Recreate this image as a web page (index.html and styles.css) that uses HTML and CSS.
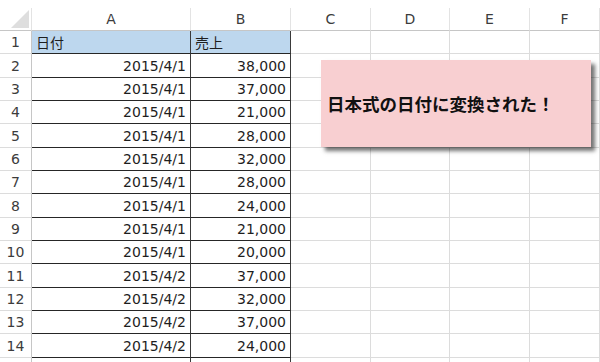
FILE: index.html
```html
<!DOCTYPE html>
<html>
  <head>
    <title>日付の変換</title>
    <meta name="viewport" content="width=device-width, initial-scale=1.0" />
    <link rel="stylesheet" href="styles.css">
  </head>
  <body>
    <div class="sheet">
      <div class="row head">
        <div class="corner"><span class="tri"></span></div>
        <div>A</div><div>B</div><div>C</div><div>D</div><div>E</div><div>F</div>
      </div>
      <div class="row">
        <div class="num">1</div>
        <div class="cell a title">日付</div>
        <div class="cell b title">売上</div>
        <div class="cell"></div><div class="cell"></div><div class="cell"></div><div class="cell"></div>
      </div>
      <div class="row">
        <div class="num">2</div>
        <div class="cell a">2015/4/1</div><div class="cell b">38,000</div>
        <div class="cell"></div><div class="cell"></div><div class="cell"></div><div class="cell"></div>
      </div>
      <div class="row">
        <div class="num">3</div>
        <div class="cell a">2015/4/1</div><div class="cell b">37,000</div>
        <div class="cell"></div><div class="cell"></div><div class="cell"></div><div class="cell"></div>
      </div>
      <div class="row">
        <div class="num">4</div>
        <div class="cell a">2015/4/1</div><div class="cell b">21,000</div>
        <div class="cell"></div><div class="cell"></div><div class="cell"></div><div class="cell"></div>
      </div>
      <div class="row">
        <div class="num">5</div>
        <div class="cell a">2015/4/1</div><div class="cell b">28,000</div>
        <div class="cell"></div><div class="cell"></div><div class="cell"></div><div class="cell"></div>
      </div>
      <div class="row">
        <div class="num">6</div>
        <div class="cell a">2015/4/1</div><div class="cell b">32,000</div>
        <div class="cell"></div><div class="cell"></div><div class="cell"></div><div class="cell"></div>
      </div>
      <div class="row">
        <div class="num">7</div>
        <div class="cell a">2015/4/1</div><div class="cell b">28,000</div>
        <div class="cell"></div><div class="cell"></div><div class="cell"></div><div class="cell"></div>
      </div>
      <div class="row">
        <div class="num">8</div>
        <div class="cell a">2015/4/1</div><div class="cell b">24,000</div>
        <div class="cell"></div><div class="cell"></div><div class="cell"></div><div class="cell"></div>
      </div>
      <div class="row">
        <div class="num">9</div>
        <div class="cell a">2015/4/1</div><div class="cell b">21,000</div>
        <div class="cell"></div><div class="cell"></div><div class="cell"></div><div class="cell"></div>
      </div>
      <div class="row">
        <div class="num">10</div>
        <div class="cell a">2015/4/1</div><div class="cell b">20,000</div>
        <div class="cell"></div><div class="cell"></div><div class="cell"></div><div class="cell"></div>
      </div>
      <div class="row">
        <div class="num">11</div>
        <div class="cell a">2015/4/2</div><div class="cell b">37,000</div>
        <div class="cell"></div><div class="cell"></div><div class="cell"></div><div class="cell"></div>
      </div>
      <div class="row">
        <div class="num">12</div>
        <div class="cell a">2015/4/2</div><div class="cell b">32,000</div>
        <div class="cell"></div><div class="cell"></div><div class="cell"></div><div class="cell"></div>
      </div>
      <div class="row">
        <div class="num">13</div>
        <div class="cell a">2015/4/2</div><div class="cell b">37,000</div>
        <div class="cell"></div><div class="cell"></div><div class="cell"></div><div class="cell"></div>
      </div>
      <div class="row">
        <div class="num">14</div>
        <div class="cell a">2015/4/2</div><div class="cell b">24,000</div>
        <div class="cell"></div><div class="cell"></div><div class="cell"></div><div class="cell"></div>
      </div>
      <!-- row 15 is only a sliver at the bottom edge -->
      <div class="row">
        <div class="num"></div>
        <div class="cell a"></div><div class="cell b"></div>
        <div class="cell"></div><div class="cell"></div><div class="cell"></div><div class="cell"></div>
      </div>

      <div class="note">日本式の日付に変換された！</div>
    </div>
  </body>
</html>
```

FILE: styles.css
```css
html,
body {
  margin: 0;
  height: 362px;
  overflow: hidden;
  background: white;
}
body {
  font-family: "DejaVu Sans", "Noto Sans CJK JP", sans-serif;
  font-size: 14px;
  color: #1e1e1e;
}

.sheet {
  position: relative;
  padding-top: 8px;
}

.row {
  display: grid;
  grid-template-columns: 32px 159px 100px 80px 79px 80px 70px;
  height: 23.35px;
}
.row > div {
  box-sizing: border-box;
  display: flex;
  align-items: center;
  border-right: 1px solid #dcdcdc;
  border-bottom: 1px solid #dcdcdc;
  overflow: hidden;
  white-space: nowrap;
}

/* column letters */
.row.head {
  height: 23px;
}
.row.head > div {
  justify-content: center;
  color: #3c3c3c;
  border-bottom: 1px solid #c6c6c6;
  border-right: 1px solid #e3e3e3;
}
.corner {
  position: relative;
}
.corner .tri {
  position: absolute;
  right: 2px;
  bottom: 2px;
  width: 18px;
  height: 18px;
  background: #dedede;
  clip-path: polygon(100% 0, 100% 100%, 0 100%);
}

/* row numbers */
.num {
  justify-content: center;
  color: #3c3c3c;
  border-right-color: #c6c6c6 !important;
}

.cell.a,
.cell.b {
  justify-content: flex-end;
  padding-right: 4px;
  border-bottom-color: #262626;
  border-right-color: #3a3a3a;
}
.cell.title {
  justify-content: flex-start;
  padding-left: 4px;
  background: #bdd7ee;
}

.note {
  position: absolute;
  left: 321px;
  top: 60px;
  width: 270px;
  height: 87px;
  box-sizing: border-box;
  padding-left: 6px;
  display: flex;
  align-items: center;
  background: #f8cfd1;
  box-shadow: 4px 4px 4px rgba(0, 0, 0, 0.55);
  font-family: "Noto Sans CJK JP", sans-serif;
  font-size: 17.5px;
  font-weight: 600;
  color: #111;
}
```
